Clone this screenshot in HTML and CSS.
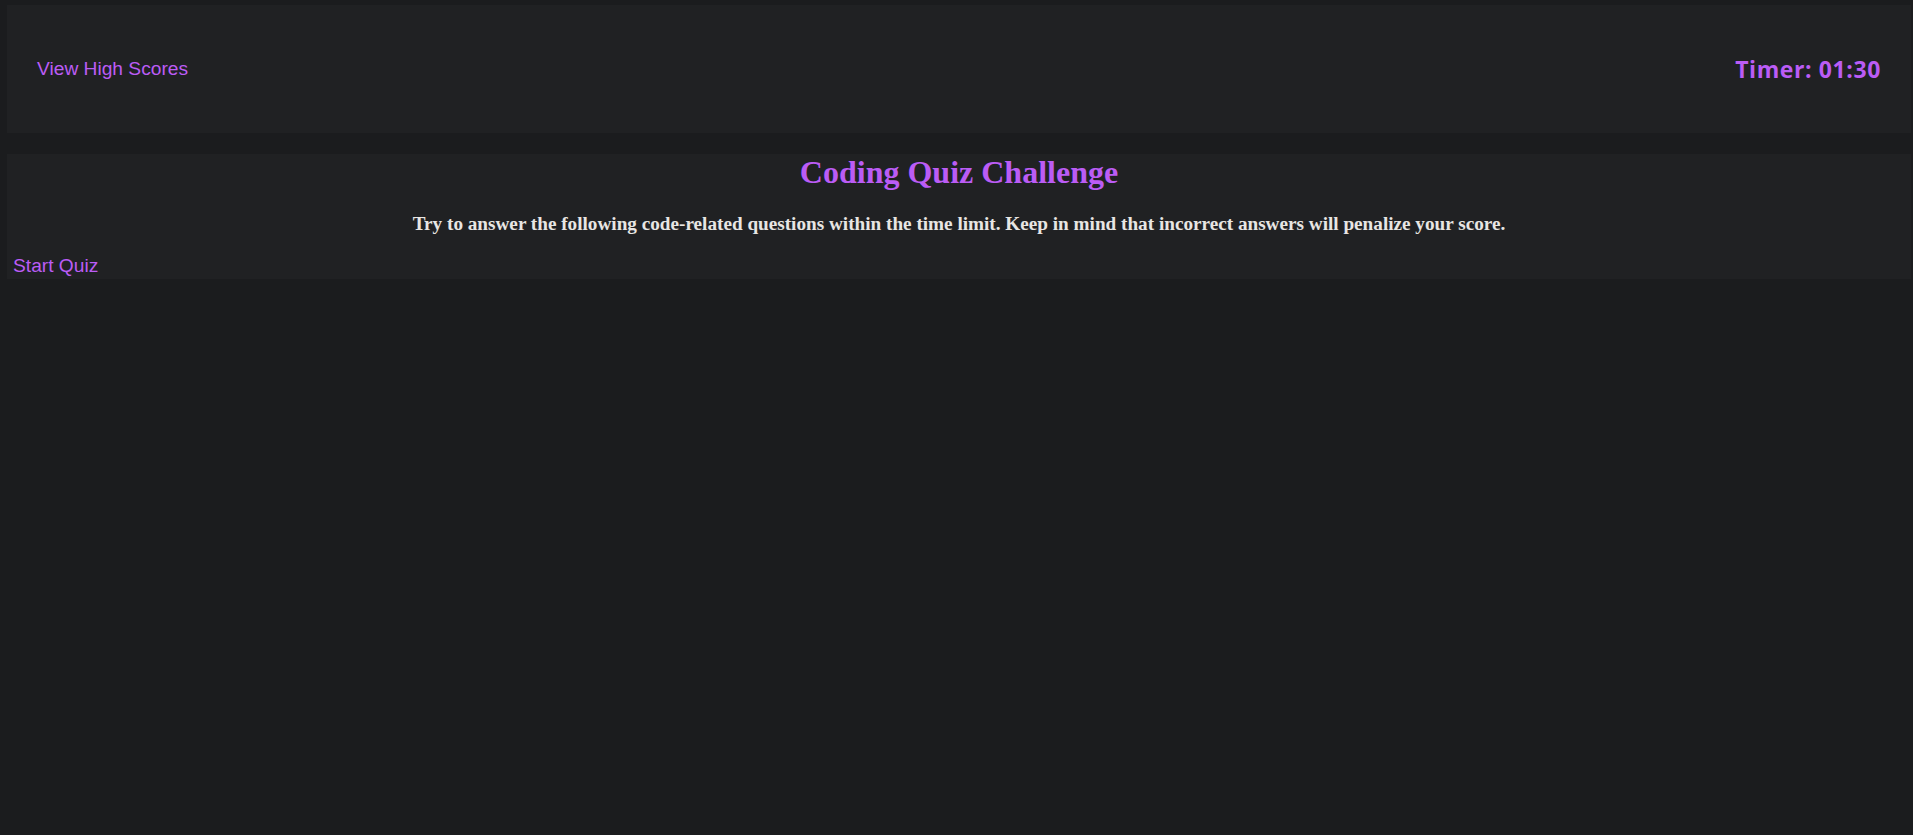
FILE: index.html
```html
<!DOCTYPE html>
<html lang="en">
<head>
<meta charset="utf-8">
<title>Coding Quiz</title>
<link rel="stylesheet" href="styles.css">
</head>
<body>
<header class="topbar">
  <a class="scores-link" href="#">View High Scores</a>
  <div class="timer">Timer: 01:30</div>
</header>
<main class="intro">
  <h1 class="title">Coding Quiz Challenge</h1>
  <h3 class="desc">Try to answer the following code-related questions within the time limit. Keep in mind that incorrect answers will penalize your score.</h3>
  <button class="start-btn" type="button">Start Quiz</button>
</main>
</body>
</html>
```
FILE: styles.css
```css
html {
  background: #1b1c1e;
}
body {
  margin: 5px 2px 0 7px;
  font-family: "Liberation Serif", "Times New Roman", serif;
  color: #e8e6e3;
  background: #1b1c1e;
}
.topbar {
  display: flex;
  justify-content: space-between;
  align-items: center;
  height: 128px;
  padding: 0 31px 0 30px;
  box-sizing: border-box;
  background: #202123;
}
.scores-link {
  font-family: "Liberation Sans", Arial, sans-serif;
  font-size: 19.2px;
  color: #bb5cf5;
  text-decoration: none;
}
.timer {
  font-family: "Open Sans", sans-serif;
  font-weight: 700;
  font-size: 23px;
  letter-spacing: 0.6px;
  margin-right: -1px;
  color: #bb5cf5;
}
.intro {
  background: #202123;
}
.title {
  margin: 21.44px 0;
  font-size: 32px;
  text-align: center;
  color: #bb5cf5;
}
.desc {
  margin: 19.2px 0 18.72px;
  font-size: 19.2px;
  text-align: center;
  color: #e8e6e3;
}
.start-btn {
  display: block;
  margin: 0;
  border: 0;
  padding: 1px 6px 2px;
  background: transparent;
  font-family: "Liberation Sans", Arial, sans-serif;
  font-size: 19.2px;
  color: #bb5cf5;
  cursor: pointer;
}
```
